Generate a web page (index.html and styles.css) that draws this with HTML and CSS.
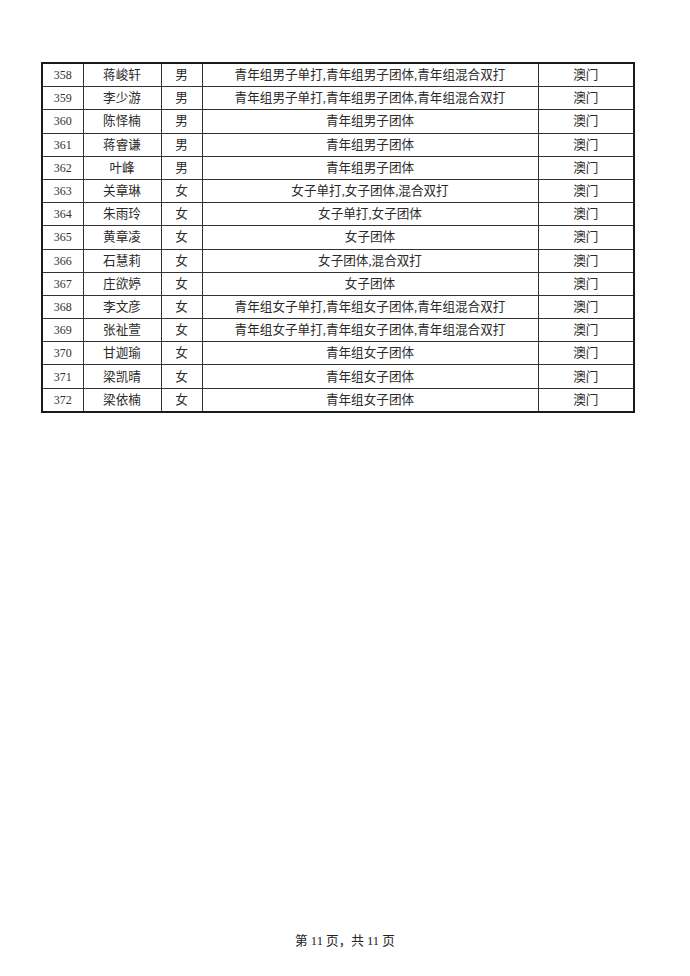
FILE: index.html
```html
<!DOCTYPE html>
<html lang="zh-CN">
<head>
<meta charset="utf-8">
<title>名单 第11页</title>
<link rel="stylesheet" href="styles.css">
</head>
<body>
<div class="page">
  <table class="roster">
    <colgroup>
      <col class="c-no"><col class="c-name"><col class="c-sex"><col class="c-event"><col class="c-region">
    </colgroup>
    <tbody>
      <tr><td class="num">358</td><td>蒋峻轩</td><td>男</td><td>青年组男子单打,青年组男子团体,青年组混合双打</td><td>澳门</td></tr>
      <tr><td class="num">359</td><td>李少游</td><td>男</td><td>青年组男子单打,青年组男子团体,青年组混合双打</td><td>澳门</td></tr>
      <tr><td class="num">360</td><td>陈怿楠</td><td>男</td><td>青年组男子团体</td><td>澳门</td></tr>
      <tr><td class="num">361</td><td>蒋睿谦</td><td>男</td><td>青年组男子团体</td><td>澳门</td></tr>
      <tr><td class="num">362</td><td>叶峰</td><td>男</td><td>青年组男子团体</td><td>澳门</td></tr>
      <tr><td class="num">363</td><td>关章琳</td><td>女</td><td>女子单打,女子团体,混合双打</td><td>澳门</td></tr>
      <tr><td class="num">364</td><td>朱雨玲</td><td>女</td><td>女子单打,女子团体</td><td>澳门</td></tr>
      <tr><td class="num">365</td><td>黄章凌</td><td>女</td><td>女子团体</td><td>澳门</td></tr>
      <tr><td class="num">366</td><td>石慧莉</td><td>女</td><td>女子团体,混合双打</td><td>澳门</td></tr>
      <tr><td class="num">367</td><td>庄欲婷</td><td>女</td><td>女子团体</td><td>澳门</td></tr>
      <tr><td class="num">368</td><td>李文彦</td><td>女</td><td>青年组女子单打,青年组女子团体,青年组混合双打</td><td>澳门</td></tr>
      <tr><td class="num">369</td><td>张祉萱</td><td>女</td><td>青年组女子单打,青年组女子团体,青年组混合双打</td><td>澳门</td></tr>
      <tr><td class="num">370</td><td>甘迦瑜</td><td>女</td><td>青年组女子团体</td><td>澳门</td></tr>
      <tr><td class="num">371</td><td>梁凯晴</td><td>女</td><td>青年组女子团体</td><td>澳门</td></tr>
      <tr><td class="num">372</td><td>梁依楠</td><td>女</td><td>青年组女子团体</td><td>澳门</td></tr>
    </tbody>
  </table>
  <div class="footer">第 11 页，共 11 页</div>
</div>
</body>
</html>
```

FILE: styles.css
```css
html, body {
  margin: 0;
  padding: 0;
  background: #ffffff;
}
.page {
  width: 690px;
  height: 976px;
  display: flex;
  flex-direction: column;
  padding: 62px 0 0 41px;
  box-sizing: border-box;
  font-family: "Liberation Serif", "Noto Sans CJK SC", serif;
  color: #2a2a2a;
}
.roster {
  border-collapse: collapse;
  table-layout: fixed;
  width: 594px;
  border: 2px solid #1a1a1a;
  font-size: 12.6px;
}
.c-no { width: 41px; }
.c-name { width: 78px; }
.c-sex { width: 41px; }
.c-event { width: 336px; }
.c-region { width: 96px; }
.roster td {
  border: 1px solid #333333;
  height: 22.2px;
  padding: 0;
  text-align: center;
  vertical-align: middle;
  line-height: 14px;
  white-space: nowrap;
}
.roster td.num {
  font-size: 12px;
  color: #333333;
}
.footer {
  margin-top: auto;
  margin-bottom: 27px;
  margin-left: -41px;
  width: 690px;
  text-align: center;
  font-size: 12.6px;
  color: #222222;
}
```
